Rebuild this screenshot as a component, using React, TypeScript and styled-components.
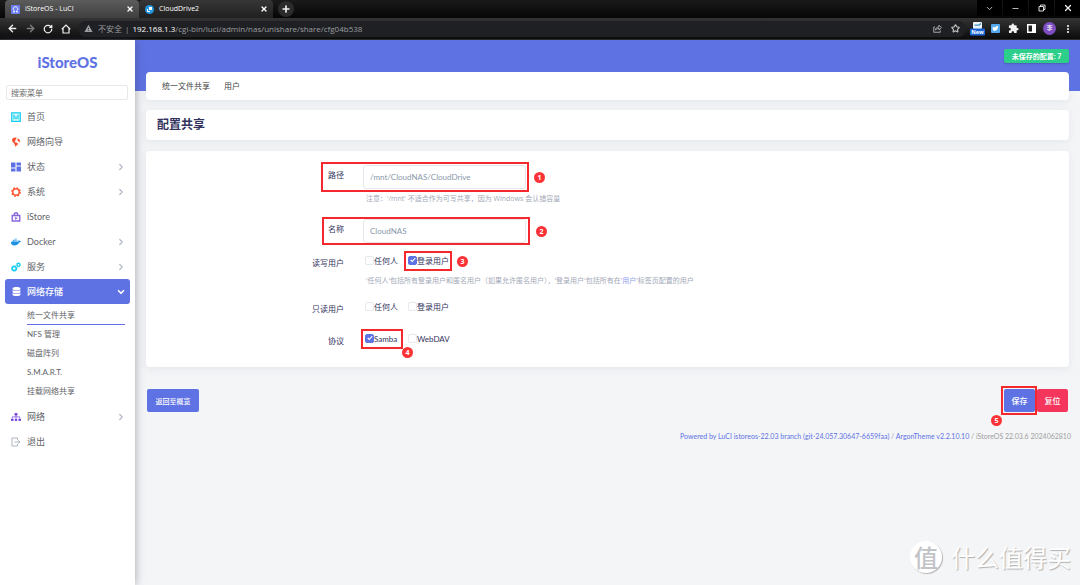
import React from 'react';
import styled, { createGlobalStyle, css } from 'styled-components';
import { FaDatabase, FaDocker, FaSitemap } from 'react-icons/fa';
import { MdExtension, MdMoreVert, MdWarning } from 'react-icons/md';
import { ArrowLeft, ArrowRight, RotateCw, Star, X, Plus, Minus, ChevronDown, ChevronRight } from 'lucide-react';

const primary = '#5e72e4';
const ui = '"Open Sans", "Noto Sans CJK SC", sans-serif';

const Global = createGlobalStyle`
  *, *::before, *::after { box-sizing: border-box; }
  body { margin: 0; background: #f4f5f7; font-family: "Lato", "Noto Sans CJK SC", sans-serif; font-size: 8px; color: #525f7f; }
  button, input { font: inherit; margin: 0; }
  button { border: 0; padding: 0; cursor: pointer; }
  a { color: inherit; text-decoration: none; }
  ul { list-style: none; margin: 0; padding: 0; }
  svg { display: block; flex: none; }
`;

const Shell = styled.div`
  min-height: 100vh;
  display: flex;
  flex-direction: column;
`;

const Browser = styled.header`
  background: #17181a;
  color: #fff;
  font-family: ${ui};
`;

const TabStrip = styled.div`
  display: flex;
  align-items: stretch;
  height: 18px;
  padding-left: 5px;
  background: linear-gradient(#1a1a1a, #060606);
`;

const Tab = styled.div<{ $active?: boolean }>`
  display: flex;
  align-items: center;
  gap: 5px;
  width: 134px;
  padding: 0 5px 0 6px;
  border-radius: 4px 4px 0 0;
  background: ${p => (p.$active ? 'linear-gradient(#5c5c5c, #3f3f3f)' : 'linear-gradient(#363636, #202020)')};
  font-size: 7px;
  line-height: 18px;
`;

const TabName = styled.span`
  flex: 1;
`;

const GlyphButton = styled.button<{ $size?: number; $dim?: boolean }>`
  display: flex;
  align-items: center;
  justify-content: center;
  width: ${p => p.$size || 18}px;
  background: none;
  color: ${p => (p.$dim ? '#7d7d7d' : '#f1f1f1')};
`;

const NewTab = styled(GlyphButton)`
  align-self: center;
  height: 16px;
  margin-left: 5px;
  border-radius: 50%;
  background: #2b2b2b;
`;

const WindowKeys = styled.div`
  display: flex;
  gap: 1px;
  margin-left: auto;
  button { width: 25px; height: 16px; background: #000; }
`;

const Toolbar = styled.div`
  display: flex;
  align-items: center;
  height: 22px;
  padding: 0 3px;
  border-bottom: 1px solid #2b2b2b;
  background: linear-gradient(#343434, #0b0b0b);
`;

const Address = styled.div`
  display: flex;
  flex: 1;
  align-items: center;
  height: 16px;
  margin: 0 2px 0 3px;
  padding: 0 6px;
  border-radius: 8px;
  background: #1f2023;
  color: #9b9da1;
  line-height: 16px;
  b { color: #fff; font-weight: 400; }
`;

const Security = styled.span`
  display: flex;
  align-items: center;
  gap: 5px;
  margin-right: 3px;
  font-size: 8px;
`;

const Url = styled.span`
  flex: 1;
  padding-left: 3px;
  font-size: 8px;
`;

const AddressTools = styled.span`
  display: flex;
  align-items: center;
  gap: 9px;
  color: #c6c6c6;
`;

const Frame = styled.div`
  flex: 1;
  display: flex;
`;

const Sidebar = styled.nav`
  flex: none;
  z-index: 1;
  width: 135px;
  padding: 12px 5px 0;
  background: #fff;
  box-shadow: 0 0 9px rgba(60, 64, 80, 0.45);
`;

const Brand = styled.a`
  display: block;
  color: ${primary};
  font-size: 15px;
  font-weight: 900;
  line-height: 20px;
  text-align: center;
`;

const Search = styled.input`
  display: block;
  width: 122px;
  height: 15px;
  margin: 13px 1px 4px;
  padding: 0 4px;
  border: 1px solid #e6e8ec;
  border-radius: 2px;
  outline: 0;
  font-size: 8px;
  color: #555;
  &::placeholder { color: #6d6d6d; opacity: 1; }
`;

const MenuLink = styled.a<{ $active?: boolean }>`
  display: flex;
  align-items: center;
  gap: 6px;
  height: 25px;
  padding: 0 4px 0 6px;
  border-radius: 3px;
  font-size: 9px;
  color: #5f6368;
  ${p => p.$active && css`
    background: ${primary};
    color: #fff;
    font-weight: 500;
  `}
`;

const IconSlot = styled.span<{ $tint: string }>`
  display: flex;
  justify-content: center;
  width: 10px;
  color: ${p => p.$tint};
`;

const MenuText = styled.span`
  flex: 1;
`;

const Arrow = styled.span<{ $open?: boolean }>`
  color: ${p => (p.$open ? '#fff' : '#b4bbc6')};
`;

const SubMenu = styled.ul`
  padding: 2px 5px 3px 22px;
`;

const SubLink = styled.a<{ $active?: boolean }>`
  display: block;
  height: 19px;
  border-bottom: 1px solid ${p => (p.$active ? primary : 'transparent')};
  font-size: 8px;
  line-height: 18px;
  color: #5f6368;
`;

const Main = styled.main`
  flex: 1;
  display: flex;
  flex-direction: column;
  padding: 0 11px 10px;
  background: linear-gradient(${primary} 51px, #f4f5f7 51px);
`;

const TopLine = styled.div`
  display: flex;
  justify-content: flex-end;
  padding: 9px 0;
`;

const Pending = styled.a`
  width: 65px;
  border-radius: 2px;
  background: #2dce89;
  box-shadow: 0 1px 2px rgba(0, 0, 0, 0.2);
  color: #fff;
  font-size: 7px;
  font-weight: 700;
  line-height: 14px;
  text-align: center;
`;

const Card = styled.section`
  border-radius: 4px;
  background: #fff;
  box-shadow: 0 2px 8px rgba(136, 152, 170, 0.15);
`;

const PageTabs = styled(Card)`
  display: flex;
  gap: 14px;
  padding: 0 16px;
  font-size: 8px;
  line-height: 28px;
  color: #444;
`;

const Heading = styled(Card)`
  margin: 10px 0 11px;
  h1 { margin: 0; padding: 0 11px; font-size: 12px; font-weight: 700; line-height: 30px; color: #32325d; }
`;

const Form = styled(Card)`
  padding: 14px 0;
`;

const Row = styled.div<{ $after?: number }>`
  display: grid;
  grid-template-columns: 198px 1fr;
  column-gap: 19px;
  margin-bottom: ${p => p.$after || 0}px;
`;

const Caption = styled.label<{ $line?: number }>`
  text-align: right;
  line-height: ${p => p.$line || 20}px;
  color: #32325d;
`;

const Anchor = styled.div`
  position: relative;
  width: 163px;
`;

const Field = styled.input`
  display: block;
  width: 100%;
  height: 24px;
  padding: 0 6px;
  border: 1px solid #e3e6ec;
  border-radius: 3px;
  outline: 0;
  background: #fff;
  color: #8898aa;
  font-size: 8px;
`;

const Hint = styled.p`
  margin: 2px 0 0;
  padding-left: 3px;
  line-height: 16px;
  font-family: ${ui};
  font-size: 7px;
  color: #a3a9b8;
  a { color: #8f9df0; }
`;

const Options = styled.div`
  display: grid;
  grid-template-columns: 43px 43px;
  height: 20px;
  padding-left: 2px;
`;

const Option = styled.label`
  position: relative;
  display: flex;
  align-items: center;
  line-height: 20px;
  white-space: nowrap;
  color: #32325d;
`;

const Tick = styled.input`
  appearance: none;
  flex: none;
  width: 9px;
  height: 9px;
  margin: 0 0 2px;
  border: 1px solid #e6e8ed;
  border-radius: 2px;
  background: #fff;
  &:checked {
    border-color: ${primary};
    background: ${primary} url("data:image/svg+xml,%3Csvg xmlns='http://www.w3.org/2000/svg' viewBox='0 0 8 8'%3E%3Cpath d='M1 4l2 2 4-4.500' fill='none' stroke='white' stroke-width='1.500'/%3E%3C/svg%3E") center / 6px no-repeat;
  }
`;

const Outline = styled.span<{ $box: string }>`
  position: absolute;
  inset: ${p => p.$box};
  border: 2px solid #f5282d;
  pointer-events: none;
`;

const Step = styled.span<{ $at: string }>`
  position: absolute;
  inset: ${p => p.$at};
  width: 11px;
  height: 11px;
  border-radius: 50%;
  background: #fb3236;
  color: #fff;
  font: 700 7px/11px "Open Sans", sans-serif;
  text-align: center;
`;

const Actions = styled.div`
  display: flex;
  justify-content: space-between;
  padding: 22px 1px 0;
`;

const ActionGroup = styled.div`
  display: flex;
  gap: 2px;
`;

const Action = styled.button<{ $tone?: string; $wide?: boolean }>`
  position: relative;
  width: ${p => (p.$wide ? 52 : 31)}px;
  height: 23px;
  border-radius: 2px;
  background: ${p => p.$tone || primary};
  color: #fff;
  font-size: ${p => (p.$wide ? 7 : 8)}px;
  font-weight: 500;
`;

const Footer = styled.footer`
  margin: 16px -2px 0 0;
  font-size: 7px;
  line-height: 16px;
  text-align: right;
  color: #a0a0a0;
  a { color: ${primary}; }
`;

const Watermark = styled.div`
  display: flex;
  align-items: center;
  justify-content: flex-end;
  gap: 9px;
  margin: auto -2px 0 0;
  color: #fff;
  font: 400 24px/36px "Noto Sans CJK SC", sans-serif;
  text-shadow: 1px 1px 1px #b0b0b0;
`;

const Seal = styled.span`
  width: 32px;
  border-radius: 50%;
  background: #fff;
  box-shadow: 1px 1px 1px #b8b8b8;
  color: #c2c3c6;
  font-size: 24px;
  font-weight: 500;
  line-height: 32px;
  text-align: center;
  text-shadow: none;
`;

const Profile = styled.button`
  width: 13px;
  height: 13px;
  margin: 0 3px;
  border-radius: 50%;
  background: #7e4fc0;
  color: #fff;
  font-size: 6px;
  line-height: 13px;
`;

const HomeIcon = () => (
  <svg width="10" height="10" viewBox="0 0 20 20" fill="none" stroke="currentColor" strokeWidth="2.5">
    <path d="M1.500 1.500h17v17h-17z" fill="#d9f8fd" />
    <path d="M6 5.500v9M10 9v5.500M14 5.500v9" />
  </svg>
);
const GlobeIcon = () => (
  <svg width="10" height="10" viewBox="0 0 20 20" fill="#fb4a2a">
    <circle cx="10" cy="10" r="9" fill="#fdf0ed" />
    <path d="M2 5c2-3 6-4.500 9-3.500l-1 3-2 1.500 1 2-2 1-1-1 3 3 4 1c1 2 0 4-2 5l-2 2.500c-1-2-1-4-2-6L3 9z" />
    <path d="M13 3l4 2 1.500 5-3-1-2-2z" />
  </svg>
);
const BlocksIcon = () => (
  <svg width="10" height="10" viewBox="0 0 20 20" fill="currentColor">
    <path d="M0 1h9v10H0zM0 13h9v6H0zM11 1h9v6h-9zM11 9h9v10h-9z" />
  </svg>
);
const GearIcon = () => (
  <svg width="10" height="10" viewBox="0 0 20 20" fill="none" stroke="currentColor">
    <circle cx="10" cy="10" r="6.500" strokeWidth="3" />
    <circle cx="10" cy="10" r="8.600" strokeWidth="2.400" strokeDasharray="3.380 3.380" />
  </svg>
);
const BagIcon = () => (
  <svg width="10" height="10" viewBox="0 0 20 20" fill="none" stroke="currentColor" strokeWidth="2.800">
    <path d="M2.500 7h15v11h-15zM6.500 7V5a3.500 3.500 0 017 0v2" />
    <path d="M8.500 10l4 2.500-4 2.500z" fill="currentColor" strokeWidth="1" />
  </svg>
);
const GearsIcon = () => (
  <svg width="10" height="10" viewBox="0 0 20 20" fill="none" stroke="currentColor">
    <circle cx="6.500" cy="13" r="4" strokeWidth="3" />
    <circle cx="6.500" cy="13" r="5.800" strokeWidth="1.500" strokeDasharray="2.280 2.280" />
    <circle cx="15" cy="5.500" r="3" strokeWidth="2.500" />
    <circle cx="15" cy="5.500" r="4.400" strokeWidth="1.200" strokeDasharray="1.730 1.730" />
  </svg>
);
const LeaveIcon = () => (
  <svg width="10" height="10" viewBox="0 0 20 20" fill="none" stroke="currentColor" strokeWidth="1.800">
    <path d="M13 6V2H2v16h11v-4M7 10h11M14.500 6.500L18 10l-3.500 3.500" />
  </svg>
);
const StoreFavicon = () => (
  <svg width="9" height="9" viewBox="0 0 18 18">
    <rect width="18" height="18" rx="2" fill="#6b7cf0" />
    <path d="M4 14h3v-2a4.500 4.500 0 114 0v2h3" fill="none" stroke="#fff" strokeWidth="2" />
  </svg>
);
const DriveFavicon = () => (
  <svg width="9" height="9" viewBox="0 0 18 18">
    <circle cx="9" cy="9" r="9" fill="#2396de" />
    <path d="M8 4h6v6h-6z" fill="#fff" />
    <path d="M5 8v5h5" fill="none" stroke="#fff" strokeWidth="2" />
  </svg>
);
const HouseIcon = () => (
  <svg width="10" height="10" viewBox="0 0 20 20" fill="none" stroke="currentColor" strokeWidth="2.400">
    <path d="M1.500 10.500L10 2l8.500 8.500M4 9v9h12V9" />
  </svg>
);
const RestoreIcon = () => (
  <svg width="8" height="8" viewBox="0 0 16 16" fill="none" stroke="currentColor" strokeWidth="1.800">
    <path d="M2 5h9v9H2zM5 5V2h9v9h-3" />
  </svg>
);
const ShareIcon = () => (
  <svg width="9" height="9" viewBox="0 0 18 18" fill="none" stroke="currentColor" strokeWidth="1.600">
    <path d="M4 6H1.500v10.500h13V13M5 12c0-4 3-6 7-6V2.500l5 5-5 4.500V9c-3 0-5 1-7 3z" />
  </svg>
);
const NoteExtension = () => (
  <svg width="15" height="14" viewBox="0 0 30 28">
    <rect x="6" y="0" width="18" height="14" rx="2" fill="#eef5fa" />
    <path d="M9 6h9l4-3" fill="none" stroke="#3c8fc0" strokeWidth="2.500" />
    <rect x="0" y="13" width="30" height="14" rx="2" fill="#1b66d6" />
    <text x="15" y="24" fill="#fff" fontFamily="Open Sans, sans-serif" fontSize="11" fontWeight="700" textAnchor="middle">New</text>
  </svg>
);
const BirdExtension = () => (
  <svg width="9" height="9" viewBox="0 0 18 18">
    <rect width="18" height="18" rx="2" fill="#55a8ec" />
    <path d="M4 5c2 2 4 2 5 1 1-3 5-2 5 0 0 6-5 9-9 7-2-2-2-5-1-8z" fill="#fff" />
  </svg>
);
const PanelIcon = () => (
  <svg width="9" height="9" viewBox="0 0 18 18">
    <rect x="1.500" y="1.500" width="15" height="15" fill="none" stroke="#fff" strokeWidth="3" />
    <path d="M10 1h7v16h-7z" fill="#fff" />
  </svg>
);

type Entry = { name: string; tint: string; icon: React.ReactNode; more?: boolean; open?: boolean };

const upper: Entry[] = [
  { name: '首页', tint: '#11cdef', icon: <HomeIcon /> },
  { name: '网络向导', tint: '#fb4a2a', icon: <GlobeIcon /> },
  { name: '状态', tint: primary, icon: <BlocksIcon />, more: true },
  { name: '系统', tint: '#fb5530', icon: <GearIcon />, more: true },
  { name: 'iStore', tint: '#8965e0', icon: <BagIcon /> },
  { name: 'Docker', tint: '#1d91e4', icon: <FaDocker size={10} />, more: true },
  { name: '服务', tint: '#11cdef', icon: <GearsIcon />, more: true },
  { name: '网络存储', tint: '#fff', icon: <FaDatabase size={9} />, open: true },
];
const lower: Entry[] = [
  { name: '网络', tint: '#7a4be0', icon: <FaSitemap size={10} />, more: true },
  { name: '退出', tint: '#a5adb8', icon: <LeaveIcon /> },
];
const shares = ['统一文件共享', 'NFS 管理', '磁盘阵列', 'S.M.A.R.T.', '挂载网络共享'];

const MenuItem = ({ entry }: { entry: Entry }) => (
  <MenuLink href="#" $active={entry.open}>
    <IconSlot $tint={entry.tint}>{entry.icon}</IconSlot>
    <MenuText>{entry.name}</MenuText>
    {entry.open && <Arrow $open><ChevronDown size={10} strokeWidth={4} /></Arrow>}
    {entry.more && <Arrow><ChevronRight size={10} strokeWidth={3} /></Arrow>}
  </MenuLink>
);

export default function App() {
  return (
    <Shell>
      <Global />
      <Browser>
        <TabStrip>
          <Tab $active>
            <StoreFavicon />
            <TabName>iStoreOS - LuCI</TabName>
            <X size={8} strokeWidth={4} />
          </Tab>
          <Tab>
            <DriveFavicon />
            <TabName>CloudDrive2</TabName>
            <X size={8} strokeWidth={4} />
          </Tab>
          <NewTab $size={16} aria-label="New tab"><Plus size={10} strokeWidth={4} /></NewTab>
          <WindowKeys>
            <GlyphButton aria-label="Search tabs"><ChevronDown size={9} /></GlyphButton>
            <GlyphButton aria-label="Minimize"><Minus size={9} /></GlyphButton>
            <GlyphButton aria-label="Restore"><RestoreIcon /></GlyphButton>
            <GlyphButton aria-label="Close"><X size={10} strokeWidth={3} /></GlyphButton>
          </WindowKeys>
        </TabStrip>
        <Toolbar>
          <GlyphButton aria-label="Back"><ArrowLeft size={11} strokeWidth={3} /></GlyphButton>
          <GlyphButton $dim aria-label="Forward"><ArrowRight size={11} strokeWidth={3} /></GlyphButton>
          <GlyphButton aria-label="Reload"><RotateCw size={10} strokeWidth={3} /></GlyphButton>
          <GlyphButton aria-label="Home"><HouseIcon /></GlyphButton>
          <Address>
            <Security><MdWarning size={9} />不安全</Security>|
            <Url><b>192.168.1.3</b>/cgi-bin/luci/admin/nas/unishare/share/cfg04b538</Url>
            <AddressTools><ShareIcon /><Star size={9} strokeWidth={3} /></AddressTools>
          </Address>
          <GlyphButton aria-label="Notes"><NoteExtension /></GlyphButton>
          <GlyphButton aria-label="Bird"><BirdExtension /></GlyphButton>
          <GlyphButton aria-label="Extensions"><MdExtension size={11} /></GlyphButton>
          <GlyphButton aria-label="Side panel"><PanelIcon /></GlyphButton>
          <Profile>李</Profile>
          <GlyphButton aria-label="Menu"><MdMoreVert size={12} /></GlyphButton>
        </Toolbar>
      </Browser>
      <Frame>
        <Sidebar>
          <Brand href="#">iStoreOS</Brand>
          <Search aria-label="搜索菜单" placeholder="搜索菜单" />
          {upper.map(e => <MenuItem key={e.name} entry={e} />)}
          <SubMenu>
            {shares.map((s, i) => <li key={s}><SubLink href="#" $active={i === 0}>{s}</SubLink></li>)}
          </SubMenu>
          {lower.map(e => <MenuItem key={e.name} entry={e} />)}
        </Sidebar>
        <Main>
          <TopLine><Pending href="#">未保存的配置: 7</Pending></TopLine>
          <PageTabs as="nav"><a href="#">统一文件共享</a><a href="#">用户</a></PageTabs>
          <Heading><h1>配置共享</h1></Heading>
          <Form>
            <Row $after={12}>
              <Caption htmlFor="path">路径</Caption>
              <div>
                <Anchor>
                  <Field id="path" defaultValue="/mnt/CloudNAS/CloudDrive" />
                  <Outline $box="-3px -3px -3px -42px" />
                  <Step $at="7px auto auto 171px">1</Step>
                </Anchor>
                <Hint>注意：'/mnt' 不适合作为可写共享，因为 Windows 会认错容量</Hint>
              </div>
            </Row>
            <Row $after={8}>
              <Caption htmlFor="name">名称</Caption>
              <Anchor>
                <Field id="name" defaultValue="CloudNAS" />
                <Outline $box="-2px -4px -2px -41px" />
                <Step $at="7px auto auto 173px">2</Step>
              </Anchor>
            </Row>
            <Row $after={8}>
              <Caption as="span" $line={24}>读写用户</Caption>
              <div>
                <Options>
                  <Option><Tick type="checkbox" />任何人</Option>
                  <Option>
                    <Tick type="checkbox" defaultChecked />登录用户
                    <Outline $box="0 -1px 0 -4px" />
                    <Step $at="5px auto auto 49px">3</Step>
                  </Option>
                </Options>
                <Hint>'任何人'包括所有登录用户和匿名用户（如果允许匿名用户），'登录用户'包括所有在'<a href="#">用户</a>'标签页配置的用户</Hint>
              </div>
            </Row>
            <Row $after={8}>
              <Caption as="span" $line={24}>只读用户</Caption>
              <Options>
                <Option><Tick type="checkbox" />任何人</Option>
                <Option><Tick type="checkbox" />登录用户</Option>
              </Options>
            </Row>
            <Row>
              <Caption as="span" $line={24}>协议</Caption>
              <Options>
                <Option>
                  <Tick type="checkbox" defaultChecked />Samba
                  <Outline $box="0 5px 0 -4px" />
                  <Step $at="18px auto auto 37px">4</Step>
                </Option>
                <Option><Tick type="checkbox" />WebDAV</Option>
              </Options>
            </Row>
          </Form>
          <Actions>
            <Action $wide>返回至概览</Action>
            <ActionGroup>
              <Action>
                保存
                <Outline $box="-3px -2px -3px -3px" />
                <Step $at="26px auto auto -13px">5</Step>
              </Action>
              <Action $tone="#f5365c">复位</Action>
            </ActionGroup>
          </Actions>
          <Footer>
            <a href="#">Powered by LuCI istoreos-22.03 branch (git-24.057.30647-6659faa)</a> / <a href="#">ArgonTheme v2.2.10.10</a> / iStoreOS 22.03.6 2024062810
          </Footer>
          <Watermark><Seal>值</Seal>什么值得买</Watermark>
        </Main>
      </Frame>
    </Shell>
  );
}
